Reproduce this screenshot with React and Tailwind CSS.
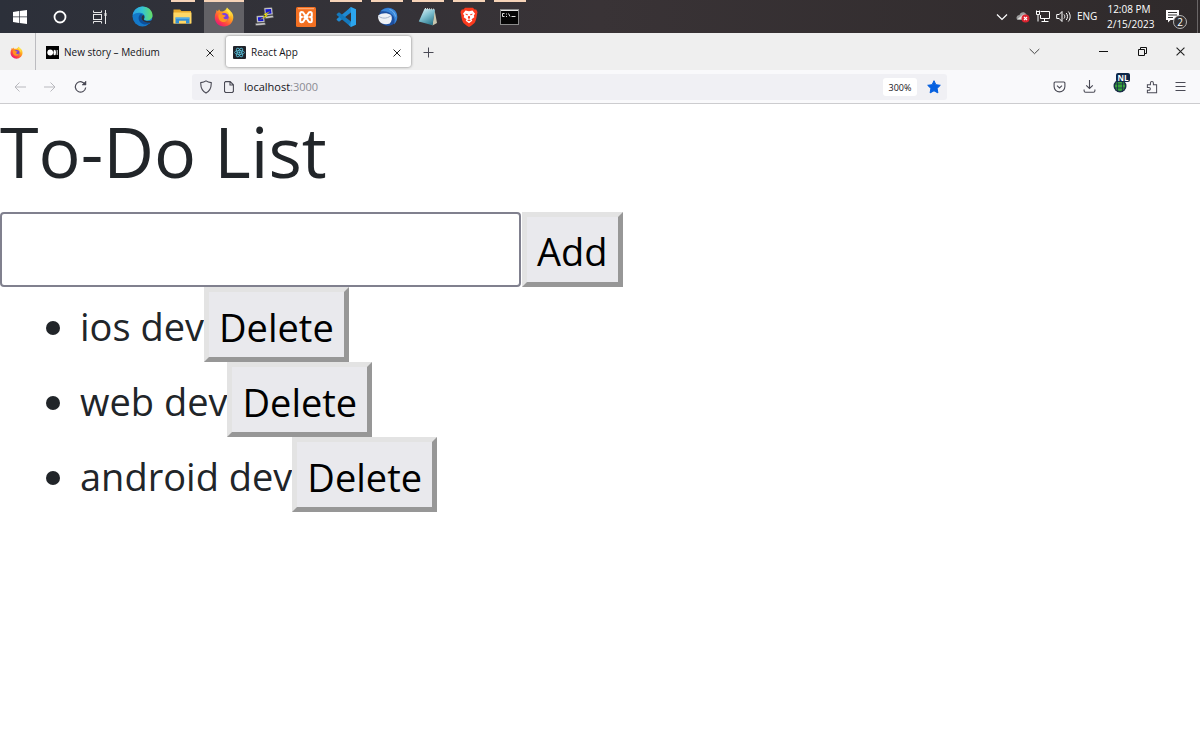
import { useState } from "react";

function FirefoxIcon({ size }) {
  return (
    <svg width={size} height={size} viewBox="0 0 20 20">
      <defs>
        <linearGradient id="ffBody" x1="0.85" y1="0.1" x2="0.2" y2="0.95">
          <stop offset="0" stopColor="#fff14a" />
          <stop offset="0.35" stopColor="#ffa41f" />
          <stop offset="0.7" stopColor="#ff4a3d" />
          <stop offset="1" stopColor="#e8157a" />
        </linearGradient>
      </defs>
      <path
        d="M13 .6c1 1.500 3 2.500 4 4.200 1.500 1.200 2.400 3.500 2.300 5.700C19.200 15.600 15.200 19.500 10 19.500S.8 15.500.8 10.500c0-2.300.5-4 1.400-5.500l.3-2 1.500 1.300L5 2.300l1.300 2 2 .1C10.500 4.200 12 3 13 .6z"
        fill="url(#ffBody)"
      />
      <circle cx="10.300" cy="10.300" r="4.300" fill="#7a3fe0" />
      <path
        d="M4.500 7.500c1.800-1 3.500-.6 4.800.4l2.400.5c-.2 1.200-1.700 1.500-2.400 2.200.6 1.900 3.200 1.900 4.600.8-.7 3.200-3.900 4.500-6.600 3.200-2.300-1.200-3.300-4-2.800-7.100z"
        fill="#ff9420"
      />
      <path d="M12 3.500c2.600 1.600 3.700 3.800 3.600 6.600 1.600-2.200.7-5.500-1.400-7.300z" fill="#ffe84a" />
    </svg>
  );
}

function WindowsIcon() {
  return (
    <svg width="16" height="16" viewBox="0 0 16 16" fill="#fff">
      <path d="M1 3l6-.9v5.500H1zM7.700 2L15 1v6.600H7.700zM1 8.300h6v5.600L1 13zM7.700 8.300H15V15l-7.300-1z" />
    </svg>
  );
}

function CortanaIcon() {
  return (
    <svg width="14" height="14" viewBox="0 0 14 14" fill="none">
      <circle cx="7" cy="7" r="5.500" stroke="#fff" strokeWidth="1.800" />
    </svg>
  );
}

function TaskViewIcon() {
  return (
    <svg width="16" height="14" viewBox="0 0 16 14" fill="none" stroke="#e8e8e8">
      <path d="M1.500.5v2h8v-2M1.500 13.500v-2h8v2" />
      <rect x="1.500" y="4.500" width="8" height="5" />
      <path d="M13.500 0v14" />
      <path d="M12.500 4.500h2" strokeWidth="3" />
    </svg>
  );
}

function EdgeIcon() {
  return (
    <svg width="21" height="21" viewBox="0 0 21 21">
      <defs>
        <linearGradient id="edgeTop" x1="0" y1="0.5" x2="1" y2="0.5">
          <stop offset="0" stopColor="#2b9fe5" />
          <stop offset="0.5" stopColor="#35c4d0" />
          <stop offset="1" stopColor="#67dd63" />
        </linearGradient>
      </defs>
      <circle cx="10.500" cy="10.500" r="10" fill="#1479c9" />
      <path
        d="M.6 9.500C1.300 4 5.500.5 10.500.5c5.700 0 10 4 10 8.700 0 3.300-2.500 5.200-5.300 5.200-2.300 0-3.600-.8-3-1.700 1.400-1.800.5-5-2.900-5.700C5.500 6.300 2 7.200.6 9.500z"
        fill="url(#edgeTop)"
      />
      <path
        d="M8 8.500c-2.700 2.700-1.500 8.300 3.500 9.800 2.500.7 5.200-.3 7.200-1.800-3.500 1-8.800-.6-9.300-4.500-.1-1.300.3-2.400 1-3.200-.7-.5-1.600-.6-2.400-.3z"
        fill="#0c4f9c"
      />
      <path
        d="M9.400 12c.5 3.900 5.800 5.500 9.300 4.500l1.300-1.500c.3-.6-.2-.8-.7-.5-3 1.200-7.700.5-7.500-1.500.9-1.200.7-2.900-.4-3.900-1.100.3-2 1.400-2 2.900z"
        fill="#2d3039"
      />
    </svg>
  );
}

function ExplorerIcon() {
  return (
    <svg width="19" height="17" viewBox="0 0 19 17">
      <path d="M.5 1.500h6.500l1.500 1.500h9.500v12.500H.5z" fill="#e8a92c" />
      <path d="M.5 4.500h18v11H.5z" fill="#ffd766" />
      <path d="M2.500 15.500V9.500h14v6h-3.500v-2.800H6v2.800z" fill="#338fd6" />
      <path d="M2.500 9.500h14v1.200h-14z" fill="#64b8ea" />
    </svg>
  );
}

function PuttyIcon() {
  return (
    <svg width="19" height="19" viewBox="0 0 19 19">
      <path d="M9 1l8-.5 1 7-8 1zM10 9.500l8-1 .5 2-8 1z" fill="#d4d4d4" stroke="#555" strokeWidth=".5" />
      <path d="M10.300 2.300l5.700-.4.600 4.500-5.700.7z" fill="#1717d6" />
      <path d="M1.500 9l7.500-.5.800 6.500-7.800.6zM.5 16.500l9.500-.7.500 2-9.700.7z" fill="#d4d4d4" stroke="#555" strokeWidth=".5" />
      <path d="M2.800 10.300l5.200-.3.500 4-5.200.3z" fill="#1717d6" />
      <path d="M15.500 4L8.500 7.300l2 1.300L4.500 13l8.500-4-2-1.300z" fill="#fff200" stroke="#444" strokeWidth=".3" />
    </svg>
  );
}

function XamppIcon() {
  return (
    <svg width="20" height="20" viewBox="0 0 20 20">
      <rect width="20" height="20" rx="1.500" fill="#f37022" />
      <path d="M2 1.700h16" stroke="#ffb482" />
      <path
        d="M4.200 6.500q0-1.500 1.500-1.500 1.600 0 2.200 1.600.7 1.800 2.100 1.800t2.100-1.800Q12.700 5 14.300 5q1.500 0 1.500 1.500v2.200q0 1.300-1.800 1.300 1.800 0 1.800 1.400v2.300q0 1.500-1.500 1.500-1.600 0-2.200-1.600-.7-1.800-2.100-1.800t-2.100 1.800q-.6 1.600-2.200 1.600-1.500 0-1.500-1.500v-2.300Q4.200 10 6 10 4.200 10 4.200 8.700z"
        fill="none"
        stroke="#fff"
        strokeWidth="2"
        strokeLinejoin="round"
      />
      <path d="M7.500 10h5" stroke="#fff" strokeWidth="2.500" />
    </svg>
  );
}

function VsCodeIcon() {
  return (
    <svg width="21" height="20" viewBox="0 0 21 20">
      <path d="M15 0l5 2.300v15.400L15 20z" fill="#2ca5ee" />
      <path d="M15 0v5.500L3 14.800l-2.300-1.700v-1.200z" fill="#1f8ad2" />
      <path d="M15 20v-5.500L3 5.200.7 6.900v1.200z" fill="#1479bd" />
      <path d="M15 5.500V0l-2.300 2.200zM15 14.500V20l-2.300-2.200z" fill="#2290d8" />
    </svg>
  );
}

function ThunderbirdIcon() {
  return (
    <svg width="21" height="20" viewBox="0 0 21 20">
      <circle cx="11" cy="9.800" r="9.200" fill="#1d4f9f" />
      <path d="M3.500 4.500C7-.3 15.500-.2 18.700 4.500c2.700 4.500 1.800 10-1.700 13 1-3 1-6.500-1-9-3-3.500-8-5-12.500-4z" fill="#3a86d8" />
      <path d="M12.500 2.500c3 .8 5.500 3.500 6 7" fill="none" stroke="#73b5f2" />
      <path d="M1.200 8.500C4.500 6 10 5.500 14 8c1.500 2.500 1 6-1.200 8.500-3.500 1.500-8.500.8-10.600-2.500C1.200 12.200.8 10 1.200 8.500z" fill="#eef1f6" />
      <path d="M1.300 9c3 2.500 8.200 3.200 12.500-.2" fill="none" stroke="#a5b3c9" />
    </svg>
  );
}

function NotepadIcon() {
  return (
    <svg width="20" height="20" viewBox="0 0 20 20">
      <defs>
        <linearGradient id="notePage" x1="0" y1="0" x2="0.6" y2="1">
          <stop offset="0" stopColor="#e6f7fa" />
          <stop offset="0.5" stopColor="#83c3d2" />
          <stop offset="1" stopColor="#327f93" />
        </linearGradient>
      </defs>
      <path d="M16.500 2.500l2.500 13.500-4.500 2.500z" fill="#c9c6ae" />
      <path d="M6.500 1.800l10.500.8-2.500 15.700L.8 14.500z" fill="url(#notePage)" />
      <path d="M7 1.500l10 .8" stroke="#efefef" strokeDasharray="1 1" />
    </svg>
  );
}

function BraveIcon() {
  return (
    <svg width="18" height="20" viewBox="0 0 18 20">
      <path d="M5 .8h8l1.500 1.700 1.700-.1L17.500 5 17 7.500c-.6 3.500-1 6.500-2.500 8.500-1.500 1.500-3.800 3-5.500 4-1.700-1-4-2.500-5.500-4C2 14 1.600 11 1 7.500L.5 5l1.300-2.600 1.700.1z" fill="#fb3b1e" />
      <path d="M5.500 3.500L9 4.200l3.500-.7L15 6.700 13.800 8.500l.5 1.800-2.800 1.900.8 1.500L9 16.200l-3.300-2.500.8-1.500-2.800-1.900.5-1.800L3 6.700z" fill="#fff" />
      <path d="M4.800 6.800l3 .3-.5 1.500zM13.200 6.800l-3 .3.500 1.500zM8.300 9h1.400l.5 2L9 12l-1.200-1zM7 13.300l2-.8 2 .8-2 1z" fill="#fb3b1e" />
    </svg>
  );
}

function TerminalIcon() {
  return (
    <svg width="19" height="16" viewBox="0 0 19 16">
      <rect x=".5" y=".5" width="18" height="15" fill="#050505" stroke="#8b8b8b" />
      <path d="M1 1.500h17" stroke="#e4e4e4" />
      <path d="M4.500 4.500h-2v3h2M6.500 4.500v1M6.500 7v1M8.500 4.500l1.500 3M11.500 7.500h4" fill="none" stroke="#ddd" />
    </svg>
  );
}

const pinnedApps = [
  { name: "Edge", icon: <EdgeIcon />, bar: "" },
  { name: "Explorer", icon: <ExplorerIcon />, bar: "w-6" },
  { name: "Firefox", icon: <FirefoxIcon size={20} />, bar: "w-full", active: true },
  { name: "PuTTY", icon: <PuttyIcon />, bar: "" },
  { name: "XAMPP", icon: <XamppIcon />, bar: "" },
  { name: "VS Code", icon: <VsCodeIcon />, bar: "w-8" },
  { name: "Thunderbird", icon: <ThunderbirdIcon />, bar: "w-8" },
  { name: "Notepad", icon: <NotepadIcon />, bar: "w-8" },
  { name: "Brave", icon: <BraveIcon />, bar: "w-8" },
  { name: "Terminal", icon: <TerminalIcon />, bar: "w-8" },
];

function Taskbar() {
  return (
    <div className="flex h-[33px] items-stretch bg-linear-to-r from-[#2c303a] via-[#393336] to-[#2f2a2b] text-white">
      <button aria-label="Start" className="flex w-10 items-center justify-center">
        <WindowsIcon />
      </button>
      <button aria-label="Search" className="flex w-10 items-center justify-center">
        <CortanaIcon />
      </button>
      <button aria-label="Task view" className="flex w-10 items-center justify-center">
        <TaskViewIcon />
      </button>
      <div className="ml-0.5 flex w-[408px] justify-between">
        {pinnedApps.map((app) => (
          <button
            key={app.name}
            aria-label={app.name}
            className={
              "relative flex w-10 items-center justify-center " +
              (app.active ? "bg-[#626166]" : "")
            }
          >
            {app.bar && (
              <span className={"absolute top-0 h-0.5 bg-[#f6d3b8] " + app.bar}></span>
            )}
            {app.icon}
          </button>
        ))}
      </div>

      {/* tray */}
      <div className="ml-auto flex items-center">
        <svg width="12" height="8" viewBox="0 0 12 8" fill="none" stroke="#fff" strokeWidth="1.200" className="mr-2">
          <path d="M1 1.500l5 5 5-5" />
        </svg>
        <svg width="14" height="13" viewBox="0 0 14 13" className="mr-1.5">
          <path d="M1 9.500C-.5 7 1.500 5 3.500 5c.5-3 5-4 6.500-1 1.500 1 1.500 5-1 5.500z" fill="#9c9c9c" />
          <path d="M1 9.500l6-5 3 .5-2 4.500z" fill="#e2e2e2" />
          <circle cx="9.500" cy="8.500" r="4" fill="#dc2430" />
          <path d="M8 7l3 3M11 7l-3 3" stroke="#fff" strokeWidth="1.100" />
        </svg>
        <svg width="14" height="13" viewBox="0 0 14 13" fill="none" stroke="#fff" className="mr-1.5">
          <path d="M4.500 1.500h9v7h-9M5.500 11.500h7M8.500 8.500v3M.5.500v4h3v-4M2 4.500v7M.5 1.500h3M4.500 5v3.500" />
        </svg>
        <svg width="15" height="13" viewBox="0 0 15 13" fill="none" stroke="#fff" className="mr-1.5">
          <path d="M.7 4.500h2.500L6 1.500v10L3.200 8.500H.7zM8 4.500c1 1.200 1 2.800 0 4M10.200 3c1.700 2 1.700 5 0 7M12.300 1.500c2.500 3 2.500 7 0 10" />
        </svg>
        <span className="w-6 text-[10px]">ENG</span>
        <div className="ml-1.5 w-11 text-center text-[10px] leading-[15px] whitespace-nowrap">
          <p>12:08 PM</p>
          <p>2/15/2023</p>
        </div>
        <button aria-label="2 notifications" className="relative ml-3.5 h-6 w-[22px]">
          <svg width="15" height="15" viewBox="0 0 15 15">
            <path d="M1 1h13v10H5.500L3 13.500V11H1z" fill="#fff" />
            <path d="M3 3.500h9M3 6h9M3 8.500h5" stroke="#333" />
          </svg>
          <span className="absolute right-0 bottom-0 flex h-3.5 w-3.5 items-center justify-center rounded-full border border-[#b5b5b5] bg-[#333031] text-[10px] leading-none">
            2
          </span>
        </button>
        <div className="ml-2.5 h-full w-[3px] border-l border-[#6a6667]"></div>
      </div>
    </div>
  );
}

function CloseIcon({ size = 8 }) {
  return (
    <svg width={size} height={size} viewBox="0 0 8 8" fill="none" stroke="#222" strokeWidth="1">
      <path d="M.5.5l7 7M7.500.5l-7 7" />
    </svg>
  );
}

function TabStrip() {
  return (
    <div className="flex h-[37px] items-center bg-[#efefef] text-[10px] text-[#15141a]">
      <div className="flex h-full w-9 items-center border-r border-[#bcbcc0] pt-0.5 pl-2.5">
        <FirefoxIcon size={13} />
      </div>
      <div className="flex h-8 w-[190px] items-center pt-0.5 pr-3 pl-2.5">
        <svg width="13" height="13" viewBox="0 0 13 13">
          <rect width="13" height="13" fill="#000" />
          <circle cx="4.200" cy="6.500" r="2.900" fill="#fff" />
          <ellipse cx="8.700" cy="6.500" rx="1.300" ry="2.700" fill="#fff" />
          <path d="M11.200 4v5" stroke="#fff" strokeWidth=".9" />
        </svg>
        <span className="ml-[5px]">New story – Medium</span>
        <button aria-label="Close New story" className="ml-auto">
          <CloseIcon />
        </button>
      </div>
      <div className="flex h-[31px] w-[185px] items-center rounded-[3px] bg-white pt-0.5 pr-2.5 pl-[7px] shadow-[0_0_3px_rgba(0,0,0,0.5)]">
        <svg width="13" height="13" viewBox="0 0 13 13" fill="none" stroke="#5ccbe8" strokeWidth=".7">
          <rect width="13" height="13" rx="1" fill="#20232a" stroke="none" />
          <ellipse cx="6.500" cy="6.500" rx="5" ry="2" />
          <ellipse cx="6.500" cy="6.500" rx="5" ry="2" transform="rotate(60 6.500 6.500)" />
          <ellipse cx="6.500" cy="6.500" rx="5" ry="2" transform="rotate(120 6.500 6.500)" />
          <circle cx="6.500" cy="6.500" r=".7" fill="#5ccbe8" />
        </svg>
        <span className="ml-[5px]">React App</span>
        <button aria-label="Close React App" className="ml-auto">
          <CloseIcon />
        </button>
      </div>
      <button aria-label="New tab" className="ml-3 pt-0.5">
        <svg width="11" height="11" viewBox="0 0 11 11" stroke="#4a4a55" strokeWidth="1">
          <path d="M5.500.5v10M.5 5.500h10" />
        </svg>
      </button>

      <div className="ml-auto flex items-center">
        <button aria-label="List all tabs" className="mr-[59px]">
          <svg width="11" height="7" viewBox="0 0 11 7" fill="none" stroke="#444">
            <path d="M.7 1l4.800 4.700L10.300 1" />
          </svg>
        </button>
        <button aria-label="Minimize" className="mr-[30px]">
          <svg width="9" height="9" viewBox="0 0 9 9" stroke="#111">
            <path d="M0 4.500h9" />
          </svg>
        </button>
        <button aria-label="Restore" className="mr-[29px]">
          <svg width="9" height="9" viewBox="0 0 9 9" fill="none" stroke="#111">
            <path d="M.5 2.500h6v6h-6zM2.500 2.500v-2h6v6h-2" />
          </svg>
        </button>
        <button aria-label="Close window" className="mr-[15px]">
          <CloseIcon size={9} />
        </button>
      </div>
    </div>
  );
}

function AddressBar() {
  return (
    <div className="flex h-[34px] items-center border-b border-[#cccccf] bg-[#f9f9fb]">
      <button aria-label="Back" className="ml-3.5">
        <svg width="12" height="10" viewBox="0 0 12 10" fill="none" stroke="#b9b9be">
          <path d="M12 5H1M5.500.5L1 5l4.500 4.500" />
        </svg>
      </button>
      <button aria-label="Forward" className="ml-[18px]">
        <svg width="12" height="10" viewBox="0 0 12 10" fill="none" stroke="#b9b9be">
          <path d="M0 5h11M6.500.5L11 5 6.500 9.500" />
        </svg>
      </button>
      <button aria-label="Reload" className="ml-[18px]">
        <svg width="13" height="13" viewBox="0 0 13 13" fill="none" stroke="#4a4a55" strokeWidth="1.200">
          <path d="M11.300 4.800A5.200 5.200 0 1 0 11.700 7.500" />
          <path d="M12 1v4H8z" fill="#4a4a55" strokeWidth=".5" />
        </svg>
      </button>
      <div className="ml-[105px] flex h-[26px] w-[755px] items-center rounded-[3px] bg-[#f0f0f4] pr-1.5 pl-2">
        <svg width="12" height="14" viewBox="0 0 12 14" fill="none" stroke="#4a4a55" strokeWidth="1.100">
          <path d="M6 .9c1.500 1 3.300 1.500 5.200 1.700.3 4.500-.9 8-5.200 10.500C1.700 10.600.5 7.100.8 2.600 2.700 2.400 4.500 1.900 6 .9z" />
        </svg>
        <svg width="10" height="12" viewBox="0 0 10 12" fill="none" stroke="#4a4a55" strokeWidth="1.100" className="ml-3">
          <path d="M1.500.6h4.700l3.200 3.200v6.700l-1 1H1.500l-1-1V1.500zM6 .6V4h3.400" />
        </svg>
        <span className="ml-2.5 pt-0.5 text-[11px] text-[#15141a]">
          localhost<span className="text-[#8b8b93]">:3000</span>
        </span>
        <button className="ml-auto h-[18px] w-[34px] rounded-[3px] bg-white pt-0.5 text-[9px] text-[#15141a]">
          300%
        </button>
        <button aria-label="Bookmarked" className="ml-2.5">
          <svg width="14" height="14" viewBox="0 0 14 14">
            <path d="M7 .7l1.900 4 4.400.6-3.200 3.100.8 4.500L7 10.800l-3.900 2.100.8-4.500L.7 5.300l4.400-.6z" fill="#0560e0" stroke="#0560e0" strokeLinejoin="round" />
          </svg>
        </button>
      </div>
      <div className="mr-3.5 ml-auto flex items-center gap-[17px]">
        <button aria-label="Save to Pocket">
          <svg width="13" height="12" viewBox="0 0 12 12" fill="none" stroke="#4a4a55" strokeWidth="1.100">
            <path d="M1.600 1h8.800q1 0 1 1v3.500a5.400 5.400 0 0 1-10.800 0V2q0-1 1-1z" />
            <path d="M3.500 4.700L6 7l2.500-2.300" />
          </svg>
        </button>
        <button aria-label="Downloads">
          <svg width="13" height="13" viewBox="0 0 12 13" fill="none" stroke="#4a4a55" strokeWidth="1.100">
            <path d="M6 0v8.500M2.700 5.300L6 8.500l3.300-3.200M.6 9.500v1.300q0 1.500 1.500 1.500h7.800q1.500 0 1.500-1.500V9.500" />
          </svg>
        </button>
        <button aria-label="Translate" className="relative h-5 w-4">
          <svg width="14" height="14" viewBox="0 0 14 14" className="mb-0.5">
            <circle cx="7" cy="7" r="6.500" fill="#1b3048" />
            <circle cx="7" cy="7" r="5" fill="#38a53c" />
            <path d="M1 5h12M1 9h12M4.500 1v12M9.500 1v12" stroke="#1b3048" strokeWidth=".8" />
          </svg>
          <span className="absolute -top-1 left-[3px] h-[9px] w-[14px] rounded-[2px] bg-[#0e2748] text-center text-[8px] leading-[9px] font-bold text-white">
            NL
          </span>
        </button>
        <button aria-label="Extensions">
          <svg width="12" height="14" viewBox="0 0 13 14" fill="none" stroke="#4a4a55" strokeWidth="1.100">
            <path d="M1.500 4.500h3.300V2.700a1.600 1.600 0 0 1 3.200 0v1.800h3.500v8.700H1.500V10.500h1.700a1.500 1.500 0 0 0 0-3H1.500z" />
          </svg>
        </button>
        <button aria-label="Menu">
          <svg width="11" height="10" viewBox="0 0 11 10" stroke="#4a4a55">
            <path d="M.5.5h10M.5 4.500h10M.5 8.500h10" />
          </svg>
        </button>
      </div>
    </div>
  );
}

const bevel =
  "h-[75px] border-[5px] border-t-[#e3e3e3] border-r-[#979797] border-b-[#979797] border-l-[#e3e3e3] bg-[#e9e9ed] px-2.5 pt-1 text-black";

function TodoList() {
  const [todos, setTodos] = useState(["ios dev", "web dev", "android dev"]);
  const [text, setText] = useState("");

  const handleAdd = () => {
    if (text.trim() === "") return;
    setTodos([...todos, text]);
    setText("");
  };

  const handleDelete = (index) => {
    setTodos(todos.filter((_, i) => i !== index));
  };

  return (
    <div className="text-[38px] text-[#212529]">
      <h1 className="pt-0.5 pb-4 text-[70px] leading-[90px]">To-Do List</h1>
      <div className="flex">
        <input
          aria-label="New task"
          className="h-[75px] w-[521px] rounded-[4px] border-2 border-[#80808e] bg-white px-2 outline-none"
          value={text}
          onChange={(e) => setText(e.target.value)}
        />
        <button className={bevel + " ml-px"} onClick={handleAdd}>
          Add
        </button>
      </div>
      <ul className="list-disc pl-20">
        {todos.map((todo, index) => (
          <li key={index} className="h-[75px] leading-[79px]">
            <div className="inline-flex items-start align-top">
              {todo}
              <button className={bevel + " leading-none"} onClick={() => handleDelete(index)}>
                Delete
              </button>
            </div>
          </li>
        ))}
      </ul>
    </div>
  );
}

export default function App() {
  return (
    <div className="min-h-screen bg-white font-['Open_Sans','Noto_Sans',sans-serif]">
      <Taskbar />
      <TabStrip />
      <AddressBar />
      <TodoList />
    </div>
  );
}
